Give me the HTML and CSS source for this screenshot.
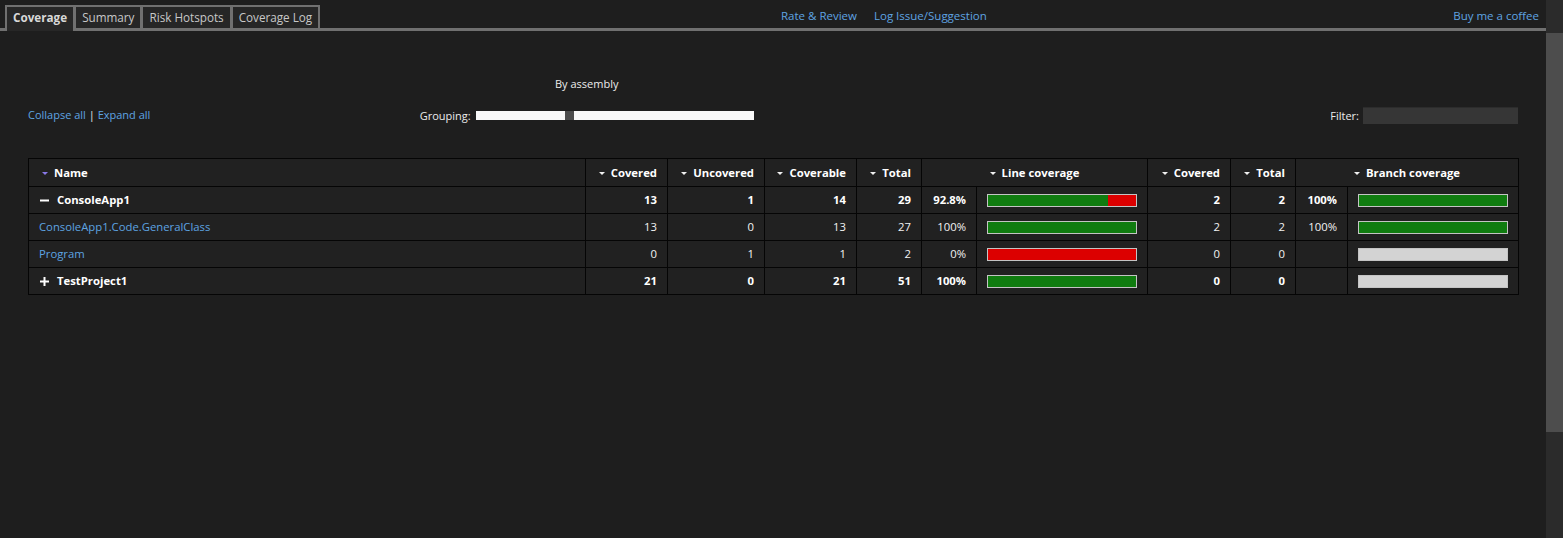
FILE: index.html
```html
<!DOCTYPE html>
<html>
<head>
<meta charset="utf-8">
<link rel="stylesheet" href="styles.css">
</head>
<body>
<div class="page">
  <div class="main">
    <div class="topbar">
      <div class="tabs">
        <a class="tab active">Coverage</a>
        <a class="tab">Summary</a>
        <a class="tab">Risk Hotspots</a>
        <a class="tab">Coverage Log</a>
      </div>
      <div class="toplinks">
        <a class="link">Rate &amp; Review</a>
        <a class="link">Log Issue/Suggestion</a>
      </div>
      <a class="link coffee">Buy me a coffee</a>
    </div>
    <div class="content">
      <div class="customize">
        <div class="col col1"><a class="link">Collapse all</a> <span class="pipe">|</span> <a class="link">Expand all</a></div>
        <div class="col col2">
          <div class="grp-label">By assembly</div>
          <div class="grp">
            <span>Grouping:</span>
            <div class="slider"><div class="thumb"></div></div>
          </div>
        </div>
        <div class="col col3"></div>
        <div class="col col4"><span>Filter:</span><div class="filter"></div></div>
      </div>
      <table class="cov">
        <colgroup>
          <col class="w-name"><col class="w-cov"><col class="w-uncov"><col class="w-coverable"><col class="w-total">
          <col class="w-perc"><col class="w-bar"><col class="w-bcov"><col class="w-btotal"><col class="w-bperc"><col class="w-bar">
        </colgroup>
        <thead>
          <tr class="hrow">
            <th class="left name-h"><span class="arrow active"></span>Name</th>
            <th class="num"><span class="arrow"></span>Covered</th>
            <th class="num"><span class="arrow"></span>Uncovered</th>
            <th class="num"><span class="arrow"></span>Coverable</th>
            <th class="num"><span class="arrow"></span>Total</th>
            <th class="center" colspan="2"><span class="arrow"></span>Line coverage</th>
            <th class="num"><span class="arrow"></span>Covered</th>
            <th class="num"><span class="arrow"></span>Total</th>
            <th class="center" colspan="2"><span class="arrow"></span>Branch coverage</th>
          </tr>
        </thead>
        <tbody>
          <tr class="asm">
            <td class="left"><svg class="tog" width="9" height="9" viewBox="0 0 9 9"><rect x="0" y="3.5" width="9" height="2" fill="#fff"/></svg>ConsoleApp1</td>
            <td class="num">13</td><td class="num">1</td><td class="num">14</td><td class="num">29</td>
            <td class="num">92.8%</td>
            <td class="barcell"><div class="bar"><div class="g" style="width:81%"></div><div class="r"></div></div></td>
            <td class="num">2</td><td class="num">2</td>
            <td class="num">100%</td>
            <td class="barcell"><div class="bar"><div class="g" style="width:100%"></div></div></td>
          </tr>
          <tr>
            <td class="left"><a class="link">ConsoleApp1.Code.GeneralClass</a></td>
            <td class="num">13</td><td class="num">0</td><td class="num">13</td><td class="num">27</td>
            <td class="num">100%</td>
            <td class="barcell"><div class="bar"><div class="g" style="width:100%"></div></div></td>
            <td class="num">2</td><td class="num">2</td>
            <td class="num">100%</td>
            <td class="barcell"><div class="bar"><div class="g" style="width:100%"></div></div></td>
          </tr>
          <tr>
            <td class="left"><a class="link">Program</a></td>
            <td class="num">0</td><td class="num">1</td><td class="num">1</td><td class="num">2</td>
            <td class="num">0%</td>
            <td class="barcell"><div class="bar"><div class="r"></div></div></td>
            <td class="num">0</td><td class="num">0</td>
            <td class="num"></td>
            <td class="barcell"><div class="bar empty"></div></td>
          </tr>
          <tr class="asm">
            <td class="left"><svg class="tog" width="9" height="9" viewBox="0 0 9 9"><rect x="0" y="3.5" width="9" height="2" fill="#fff"/><rect x="3.5" y="0" width="2" height="9" fill="#fff"/></svg>TestProject1</td>
            <td class="num">21</td><td class="num">0</td><td class="num">21</td><td class="num">51</td>
            <td class="num">100%</td>
            <td class="barcell"><div class="bar"><div class="g" style="width:100%"></div></div></td>
            <td class="num">0</td><td class="num">0</td>
            <td class="num"></td>
            <td class="barcell"><div class="bar empty"></div></td>
          </tr>
        </tbody>
      </table>
    </div>
  </div>
  <div class="scrollbar"><div class="sthumb"></div></div>
</div>
</body>
</html>
```
FILE: styles.css
```css
html, body {
  margin: 0;
  padding: 0;
  background: #1e1e1e;
  height: 538px;
  overflow: hidden;
}
body {
  font-family: "Open Sans", "Noto Sans", sans-serif;
  font-size: 12px;
  color: #ececec;
}
.page {
  display: flex;
  height: 538px;
}
.main {
  flex: 1;
  min-width: 0;
}
.link {
  color: #5ea4e2;
  text-decoration: none;
}
.topbar {
  display: grid;
  grid-template-columns: 781px auto 1fr;
  align-items: end;
  height: 28px;
  border-bottom: 3px solid #707070;
  font-size: 11.5px;
}
.tabs {
  display: flex;
  padding-left: 5px;
  height: 23px;
  font-size: 11.7px;
}
.tab {
  border: 2px solid #707070;
  border-bottom: 0;
  padding: 0 6px;
  line-height: 21px;
  background: #262626;
  color: #c8c8c8;
}
.tab + .tab {
  margin-left: -1px;
}
.tab.active {
  font-weight: bold;
  color: #d8d8d8;
  background: #272727;
  margin-bottom: -3px;
  padding-bottom: 3px;
}
.toplinks {
  display: flex;
  gap: 17px;
  align-self: center;
  margin-top: 3px;
}
.coffee {
  justify-self: end;
  margin-right: 7px;
  align-self: center;
  margin-top: 3px;
}
.content {
  padding: 0 28px;
}
.customize {
  display: grid;
  grid-template-columns: 1fr 1fr 1fr 1fr;
  align-items: end;
  margin-top: 45px;
  font-size: 11px;
}
.col1 {
  line-height: 16px;
  padding-bottom: 1px;
}
.pipe {
  color: #e8e8e8;
}
.col2 {
  display: flex;
  flex-direction: column;
  align-items: center;
}
.grp-label {
  line-height: 16px;
  margin-bottom: 15px;
}
.grp {
  display: flex;
  align-items: center;
  gap: 5px;
  height: 17px;
  line-height: 15px;
}
.slider {
  width: 278px;
  height: 9px;
  background: #f8f8f8;
  display: flex;
}
.thumb {
  width: 9px;
  height: 9px;
  margin-left: 89px;
  background: #4b4b4b;
}
.col4 {
  display: flex;
  justify-content: flex-end;
  align-items: center;
  gap: 4px;
  height: 17px;
  line-height: 15px;
}
.filter {
  width: 155px;
  height: 17px;
  background: #363636;
  box-sizing: border-box;
  border-top: 1px solid #2c2c2c;
}
.cov {
  margin-top: 34px;
  width: 1490px;
  table-layout: fixed;
  border-collapse: collapse;
  border: 1px solid #050505;
  background: #212121;
  font-size: 11.3px;
}
.w-name { width: 557px; }
.w-cov { width: 82px; }
.w-uncov { width: 97px; }
.w-coverable { width: 92px; }
.w-total { width: 65px; }
.w-perc { width: 55px; }
.w-bar { width: 171px; }
.w-bcov { width: 83px; }
.w-btotal { width: 65px; }
.w-bperc { width: 52px; }
.cov tr {
  height: 27px;
}
.cov tr.hrow {
  height: 28px;
}
.cov th, .cov td {
  border: 1px solid #050505;
  padding: 0 10px;
  line-height: 16px;
  white-space: nowrap;
  overflow: hidden;
}
.cov th {
  font-weight: bold;
  color: #fff;
}
.cov td {
  color: #f2f2f2;
}
.cov .left { text-align: left; }
.cov .num { text-align: right; }
.cov .center { text-align: center; }
.cov .name-h { padding-left: 13px; }
.asm td {
  font-weight: bold;
  color: #fff;
}
.arrow {
  display: inline-block;
  width: 0;
  height: 0;
  border-left: 3px solid transparent;
  border-right: 3px solid transparent;
  border-top: 3px solid #f0f0f0;
  margin-right: 6px;
  vertical-align: middle;
}
.arrow.active {
  border-top-color: #8878e8;
}
.tog {
  margin: 0 8px 0 1px;
  vertical-align: -0.5px;
}
.barcell {
  padding: 0 10px;
}
.bar {
  display: flex;
  width: 150px;
  height: 13px;
  box-sizing: border-box;
  border: 1px solid #c4c4c4;
}
.bar .g {
  background: #107c10;
}
.bar .r {
  flex: 1;
  background: #dc0000;
}
.bar.empty {
  background: #d3d3d3;
}
.scrollbar {
  width: 17px;
  background: #2b2b2b;
  padding-top: 33px;
  box-sizing: border-box;
}
.sthumb {
  height: 399px;
  background: #4d4d4d;
}
```
